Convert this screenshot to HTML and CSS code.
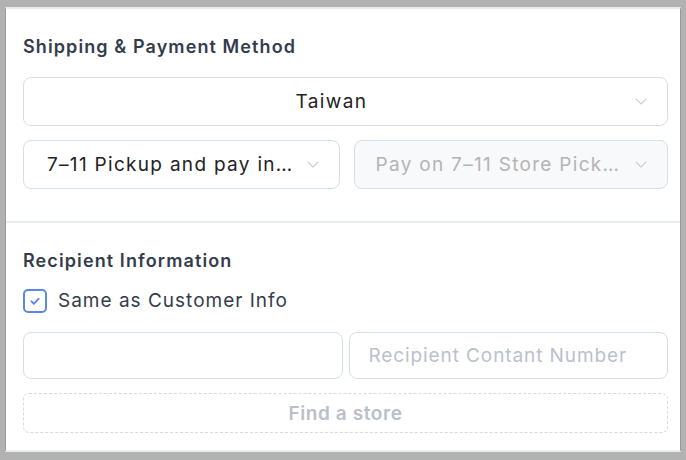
FILE: index.html
```html
<!DOCTYPE html>
<html>
<head>
<title>Checkout</title>
<link rel="stylesheet" href="styles.css">
</head>
<body>

<div class="panel">
  <section class="seccion">
    <h2 class="seccion__titulo">Shipping &amp; Payment Method</h2>
    <div class="selector selector--centro">
      <span class="selector__valor">Taiwan</span>
      <svg class="selector__flecha" viewBox="0 0 14 8"><path d="M1 1l6 6 6-6"/></svg>
    </div>
    <div class="fila">
      <div class="selector">
        <span class="selector__valor">7–11 Pickup and pay in store</span>
        <svg class="selector__flecha" viewBox="0 0 14 8"><path d="M1 1l6 6 6-6"/></svg>
      </div>
      <div class="selector selector--off">
        <span class="selector__valor">Pay on 7–11 Store Pickup</span>
        <svg class="selector__flecha" viewBox="0 0 14 8"><path d="M1 1l6 6 6-6"/></svg>
      </div>
    </div>
  </section>

  <section class="seccion seccion--abajo">
    <h2 class="seccion__titulo">Recipient Information</h2>
    <label class="check">
      <span class="check__caja">
        <svg viewBox="0 0 14 14"><path d="M3.3 7.2l2.6 2.6 4.8-5.2"/></svg>
      </span>
      Same as Customer Info
    </label>
    <div class="fila fila--estrecha">
      <input class="campo" type="text">
      <input class="campo" type="text" placeholder="Recipient Contant Number">
    </div>
    <button class="boton-tienda">Find a store</button>
  </section>
</div>

</body>
</html>
```

FILE: styles.css
```css
html {
  font-family: Inter, "Liberation Sans", sans-serif;
  letter-spacing: 1px;
}

body {
  margin: 0;
  background-color: #b2b2b2;
  padding: 7px 5px 8px 5px;
  height: 460px;
  box-sizing: border-box;
}

.panel {
  background-color: #fff;
  border-left: 1px solid #999;
  border-right: 1px solid #999;
  border-top: 2px solid #e8ebf0;
  border-bottom: 2px solid #e8ebf0;
  height: 100%;
  box-sizing: border-box;
}

.seccion {
  padding: 26px 12px 32px 17px;
}

.seccion--abajo {
  border-top: 2px solid #e8ebf0;
  padding-top: 26px;
  padding-bottom: 17px;
}

.seccion__titulo {
  margin: 0 0 18px;
  font-size: 18px;
  line-height: 24px;
  font-weight: 600;
  letter-spacing: 1.1px;
  color: #343c4c;
}

.seccion--abajo .seccion__titulo {
  margin-bottom: 16px;
}

.fila {
  display: flex;
  gap: 14px;
  margin-top: 14px;
}

.fila--estrecha {
  gap: 6px;
  margin-top: 19px;
}

.selector {
  flex: 1;
  min-width: 0;
  height: 49px;
  box-sizing: border-box;
  border: 1.5px solid #d6dee8;
  border-radius: 8px;
  display: flex;
  align-items: center;
  padding: 0 20px 0 23px;
  gap: 14px;
  font-size: 19px;
  letter-spacing: 1.3px;
  color: #222;
}

.selector__valor {
  flex: 1;
  min-width: 0;
  white-space: nowrap;
  overflow: hidden;
  text-overflow: ellipsis;
}

.selector--centro .selector__valor {
  text-align: center;
  padding-right: 5px;
  letter-spacing: 1.4px;
}

.selector--off {
  background-color: #f7f9fb;
  color: #b4b4b4;
  padding-left: 21px;
}

.selector__flecha {
  width: 12px;
  height: 7px;
  flex: none;
  fill: none;
  stroke: #c2c6cc;
  stroke-width: 1.3;
}

.check {
  display: flex;
  align-items: center;
  gap: 11px;
  font-size: 19px;
  line-height: 24px;
  color: #343c4c;
}

.check__caja {
  width: 24px;
  height: 24px;
  box-sizing: border-box;
  border: 2px solid #5a88e6;
  border-radius: 5px;
  display: flex;
  align-items: center;
  justify-content: center;
}

.check__caja svg {
  width: 14px;
  height: 14px;
  fill: none;
  stroke: #5a88e6;
  stroke-width: 1.8;
  stroke-linecap: round;
  stroke-linejoin: round;
}

.campo {
  flex: 1;
  min-width: 0;
  height: 47px;
  box-sizing: border-box;
  border: 1.5px solid #d6dee8;
  border-radius: 8px;
  padding: 0 19px;
  font-family: inherit;
  font-size: 19px;
  letter-spacing: 0.9px;
  color: #222;
  outline: none;
}

.campo::placeholder {
  color: #bac1cc;
}

.boton-tienda {
  display: block;
  width: 100%;
  height: 40px;
  margin-top: 14px;
  border: 1.5px dashed #d3dae4;
  border-radius: 6px;
  background-color: #fff;
  font-family: inherit;
  font-size: 19px;
  font-weight: 600;
  letter-spacing: 0.6px;
  color: #b9c0cc;
}
```
